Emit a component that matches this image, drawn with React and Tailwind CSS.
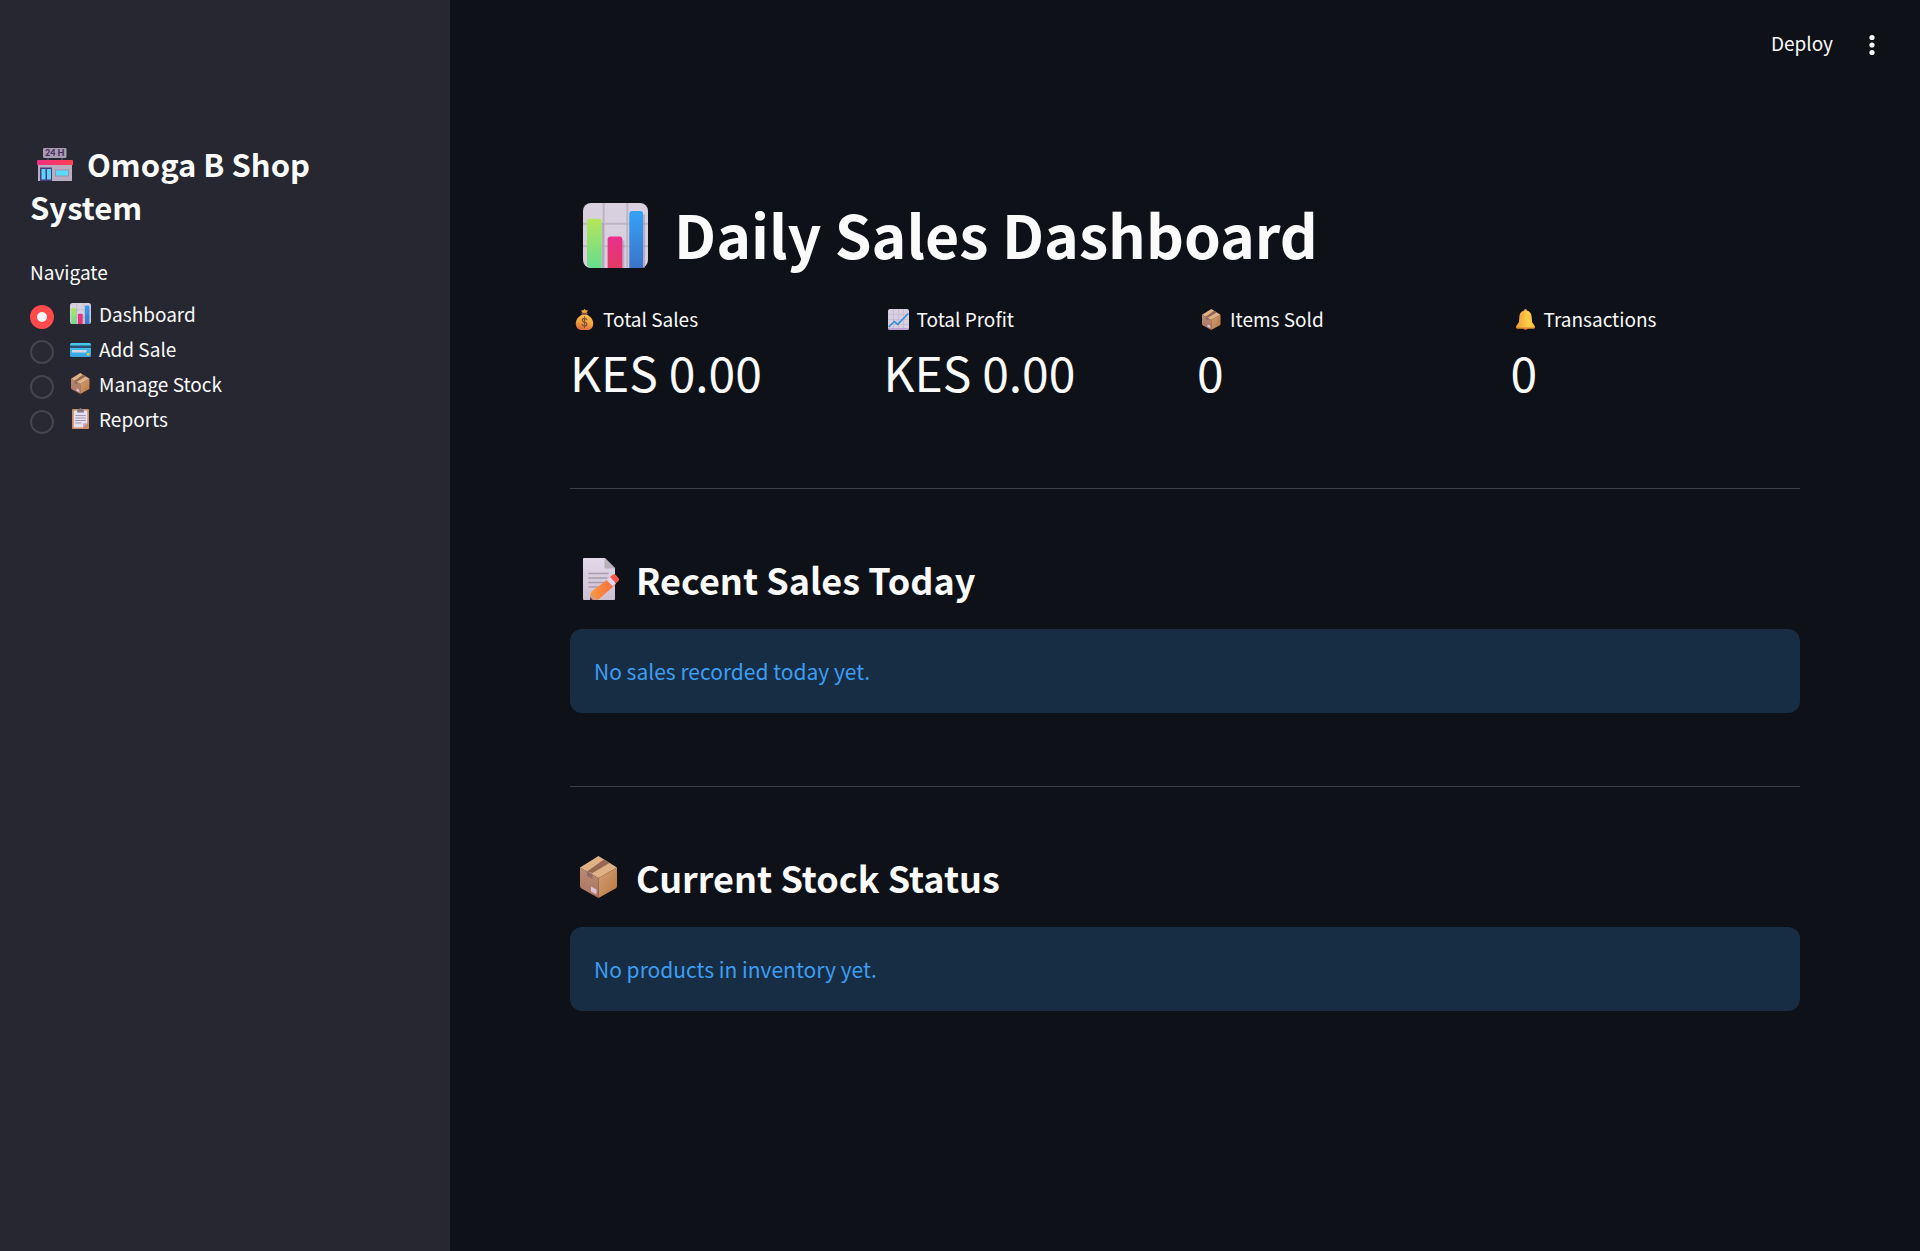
import { useId, useState } from "react";

function ChartEmoji({ className }) {
  const id = useId();
  return (
    <svg viewBox="0 0 66 66" className={className} aria-hidden="true">
      <defs>
        <linearGradient id={id + "g"} x1="0" y1="0" x2="0" y2="1">
          <stop stopColor="#b4e65a" />
          <stop offset="1" stopColor="#66dd8e" />
        </linearGradient>
        <linearGradient id={id + "r"} x1="0" y1="0" x2="0" y2="1">
          <stop stopColor="#e9308c" />
          <stop offset="1" stopColor="#e33a64" />
        </linearGradient>
        <linearGradient id={id + "b"} x1="0" y1="0" x2="0" y2="1">
          <stop stopColor="#34a2f6" />
          <stop offset="1" stopColor="#3c74ca" />
        </linearGradient>
      </defs>
      <rect width="66" height="66" rx="8" fill="#d8d0de" />
      <path d="M21 0V66M45 0V66M0 21H66M0 44H66" stroke="#bcb5c4" strokeWidth="2" />
      <path d="M20 20V66M41 38V66M62 12V66" stroke="#a595b6" strokeWidth="2" opacity=".6" />
      <path d="M4 19a3 3 0 0 1 3-3h9a3 3 0 0 1 3 3v47H8q-4-1-4-4z" fill={`url(#${id}g)`} />
      <path d="M25 37a3 3 0 0 1 3-3h9a3 3 0 0 1 3 3v29H25z" fill={`url(#${id}r)`} />
      <path d="M47 11a3 3 0 0 1 3-3h8a3 3 0 0 1 3 3v55H47z" fill={`url(#${id}b)`} />
    </svg>
  );
}

function ShopEmoji({ className }) {
  const id = useId();
  return (
    <svg viewBox="0 0 36 33" className={className} aria-hidden="true">
      <defs>
        <linearGradient id={id}>
          <stop stopColor="#ec2f86" />
          <stop offset="1" stopColor="#ff3f4e" />
        </linearGradient>
      </defs>
      <path d="M11 9v4M25 9v4" stroke="#5b4a66" strokeWidth="1.5" />
      <rect x="6" y="0" width="23.500" height="10" rx="1.200" fill="#a99bb0" />
      <text x="17.800" y="8.300" textAnchor="middle" fontSize="9" fontWeight="900" fill="#4b2e68" fontFamily="Lato, sans-serif">
        24 H
      </text>
      <path d="M1 16h34v17H1z" fill="#b9adc2" />
      <path d="M0 13q0-1 1-1h34q1 0 1 1v4H0z" fill={`url(#${id})`} />
      <path d="M3 19.500h12V33H3z" fill="#4a3a7c" />
      <path d="M4.500 21h4v10.500h-4zM10 21h4v10.500h-4z" fill="#58d4fb" />
      <rect x="18.500" y="22" width="13" height="6" fill="#58dcfd" stroke="#9c90ac" />
    </svg>
  );
}

function CardEmoji({ className }) {
  const id = useId();
  return (
    <svg viewBox="0 0 21 21" className={className} aria-hidden="true">
      <defs>
        <linearGradient id={id} x1="0" y1="0" x2="0" y2="1">
          <stop stopColor="#45cdea" />
          <stop offset="1" stopColor="#36a3e4" />
        </linearGradient>
      </defs>
      <rect y="5" width="21" height="14" rx="1.500" fill={`url(#${id})`} />
      <path d="M0 7.500h21V10H0z" fill="#2e4d70" />
      <rect x="2" y="12" width="14.500" height="2.600" rx=".5" fill="#d5d3e4" />
      <rect x="17" y="15" width="2.400" height="2.400" rx=".4" fill="#f9c440" />
    </svg>
  );
}

function BoxEmoji({ className }) {
  const id = useId();
  return (
    <svg viewBox="0 0 42 42" className={className} aria-hidden="true">
      <defs>
        <linearGradient id={id + "l"} x1="0" y1="0" x2="0" y2="1">
          <stop stopColor="#b98a72" />
          <stop offset="1" stopColor="#ad7460" />
        </linearGradient>
        <linearGradient id={id + "r"} x1="0" y1="0" x2="1" y2="1">
          <stop stopColor="#d3a076" />
          <stop offset="1" stopColor="#b8763f" />
        </linearGradient>
      </defs>
      <path d="M2 11.500 20.500 22v20L3.500 32.500Q2 31.500 2 30z" fill={`url(#${id}l)`} />
      <path d="M39 11.500 20.500 22v20l17-9.500q1.500-1 1.500-2.500z" fill={`url(#${id}r)`} />
      <path d="M20.500 0 39 11.500 20.500 22 2 11.500z" fill="#dfb184" />
      <path d="M26 3.500 31.500 7 14.500 17 9 15.500z" fill="#966753" />
      <path d="M9 15.500 14.500 18v5L9 20z" fill="#8f6b66" />
      <path d="m13 30.500 5.500 3v5l-5.500-3z" fill="#d9c3dc" />
    </svg>
  );
}

function ClipboardEmoji({ className }) {
  return (
    <svg viewBox="0 0 21 21" className={className} aria-hidden="true">
      <rect x="2" y="1" width="17" height="20" rx="1" fill="#cf8c62" />
      <path d="M3.800 2.500h13.500v12.700L13 19.600H3.800z" fill="#e6dff0" />
      <path d="M17.300 15.200 13 19.600v-3.400q0-1 1-1z" fill="#b9abc9" />
      <path d="M5.300 7.500h10.500M5.300 10h10.500M5.300 12.500h10.500M5.300 15h6" stroke="#9a8fa9" strokeWidth=".9" />
      <path d="M7.200 4.500V2.300q0-.8.800-.8h1q.2-1.500 1.500-1.500T12 1.500h1q.8 0 .8.800v2.200z" fill="#7f7685" />
    </svg>
  );
}

function MoneyBagEmoji({ className }) {
  const id = useId();
  return (
    <svg viewBox="0 0 21 21" className={className} aria-hidden="true">
      <defs>
        <linearGradient id={id} x1=".6" y1="0" x2=".3" y2="1">
          <stop stopColor="#fcc44b" />
          <stop offset=".5" stopColor="#f3a23c" />
          <stop offset="1" stopColor="#d9683c" />
        </linearGradient>
      </defs>
      <path d="M8.500 4 7 1.200 9 1.500 10.500 0 12 1.500 14 1.200 12.500 4z" fill="#f5a93d" />
      <path d="M8.300 5.500h4.400c3.800 1.800 6.500 5.300 6.500 9 0 4.300-2.500 6.500-5.500 6.500H7.300c-3 0-5.500-2.200-5.500-6.500 0-3.700 2.700-7.200 6.500-9z" fill={`url(#${id})`} />
      <path d="M8 4.600h5" stroke="#8c553c" strokeWidth="1.500" strokeLinecap="round" />
      <path d="M12.800 10.800c-.4-1-1.300-1.400-2.300-1.400-1.300 0-2.300.7-2.300 1.800 0 2.600 4.700 1.200 4.700 3.900 0 1.200-1.100 1.900-2.400 1.900s-2.200-.6-2.500-1.600M10.500 8v10.500" stroke="#84513f" strokeWidth="1.300" fill="none" strokeLinecap="round" />
    </svg>
  );
}

function TrendEmoji({ className }) {
  return (
    <svg viewBox="0 0 21 21" className={className} aria-hidden="true">
      <rect width="21" height="21" rx="2" fill="#d8d0e2" />
      <path d="M5.500 0v21M10.500 0v21M15.500 0v21M0 5.500h21M0 10.500h21M0 15.500h21" stroke="#c3bbce" strokeWidth=".8" />
      <path d="M.5 20h20" stroke="#b596cf" strokeWidth="1.500" />
      <path d="m.7 18 5.600-5.500 3.400 2.800L20.300 4.500" stroke="#3593dc" strokeWidth="1.700" fill="none" strokeLinejoin="round" />
    </svg>
  );
}

function BellEmoji({ className }) {
  const id = useId();
  return (
    <svg viewBox="0 0 21 21" className={className} aria-hidden="true">
      <defs>
        <linearGradient id={id}>
          <stop stopColor="#f49a3a" />
          <stop offset=".65" stopColor="#fdcf48" />
          <stop offset="1" stopColor="#f9b940" />
        </linearGradient>
      </defs>
      <path d="M8 18.500h5q-.3 2.500-2.500 2.500T8 18.500z" fill="#c9553c" />
      <circle cx="10.500" cy="1.600" r="1.500" fill="#f2a03c" />
      <path d="M10.500 1.500c3.800 0 5.800 2.500 6.100 6l.5 5.500 2.600 4q.8 2.500-1.200 2.500h-16q-2 0-1.200-2.500l2.600-4 .5-5.500c.3-3.500 2.300-6 6.100-6z" fill={`url(#${id})`} />
      <path d="M1.500 18.900h18" stroke="#e68240" strokeWidth="1" />
    </svg>
  );
}

function MemoEmoji({ className }) {
  const id = useId();
  return (
    <svg viewBox="-2 0 42 42" className={className} aria-hidden="true">
      <defs>
        <linearGradient id={id + "p"} x1="0" y1="0" x2="0" y2="1">
          <stop stopColor="#e2d9ea" />
          <stop offset="1" stopColor="#cdbfd2" />
        </linearGradient>
        <linearGradient id={id + "o"}>
          <stop stopColor="#ff9a3c" />
          <stop offset="1" stopColor="#f4693f" />
        </linearGradient>
      </defs>
      <path d="M4 0h21l10 10v31q0 1-1 1H4q-1 0-1-1V1q0-1 1-1z" fill={`url(#${id}p)`} />
      <path d="M24.500 0 35 10.500h-9q-1.500 0-1.500-1.500z" fill="#b6b0b9" />
      <path d="M9 15.500h19M9 20h18M9 24.500h15M9 29h9" stroke="#a69dac" strokeWidth="1.600" strokeLinecap="round" />
      <path d="m11 34 19-14.500 6 6.500-17.500 15.500-8.500.5z" fill={`url(#${id}o)`} />
      <path d="m11 35 6.500 7H10z" fill="#d89a7d" />
      <path d="m10.300 39 2.400 3H10z" fill="#4a2b55" />
      <path d="m26.500 22 3.500-3 6 6.200-3.400 3.100z" fill="#e3d8ee" />
      <path d="m30 19 3-2.400q1.500-1 2.800.3l2.700 3q1.300 1.500 0 3L36 25.200z" fill="#f9584f" />
    </svg>
  );
}

const pages = [
  { name: "Dashboard", Icon: ChartEmoji },
  { name: "Add Sale", Icon: CardEmoji },
  { name: "Manage Stock", Icon: BoxEmoji },
  { name: "Reports", Icon: ClipboardEmoji },
];

const metrics = [
  { label: "Total Sales", value: "KES 0.00", Icon: MoneyBagEmoji },
  { label: "Total Profit", value: "KES 0.00", Icon: TrendEmoji },
  { label: "Items Sold", value: "0", Icon: BoxEmoji },
  { label: "Transactions", value: "0", Icon: BellEmoji },
];

function Section({ Icon, title, message }) {
  return (
    <section className="mt-[73px] border-t border-[#3d3f43] pt-[65px]">
      <h2 className="flex items-center text-[36px] font-semibold leading-[50px]">
        <Icon className="ml-2 mr-4 size-[42px] shrink-0" />
        {title}
      </h2>
      <p className="mt-[25px] rounded-xl bg-[#172d43] px-6 py-6 text-[21px] leading-9 text-[#3d9df3]">{message}</p>
    </section>
  );
}

export default function App() {
  const [page, setPage] = useState("Dashboard");
  return (
    <div className="flex min-h-screen bg-[#0e1117] font-['Noto_Sans_CJK_SC',sans-serif] text-[#fafafa]">
      <aside className="w-[450px] shrink-0 bg-[#262730] px-[30px] pt-[142px]">
        <h1 className="text-[31px] font-semibold leading-[43px]">
          <ShopEmoji className="-mb-1 ml-[7px] mr-[14px] inline h-[33px] w-9 align-baseline" />
          Omoga B Shop System
        </h1>
        <fieldset className="mt-7">
          <legend className="text-[19px] leading-8">Navigate</legend>
          <div className="mt-2">
            {pages.map(({ name, Icon }) => (
              <label key={name} className="flex h-[35px] cursor-pointer items-center text-[19px] leading-8">
                <input
                  type="radio"
                  name="page"
                  value={name}
                  checked={page === name}
                  onChange={() => setPage(name)}
                  className="mt-[7px] size-6 appearance-none rounded-full border-2 border-[#44454e] bg-[#282932] checked:border-[7px] checked:border-[#ff4b4b] checked:bg-[#f3f4f9]"
                />
                <Icon className="ml-4 mr-2 size-[21px]" />
                {name}
              </label>
            ))}
          </div>
        </fieldset>
      </aside>
      <div className="min-w-0 flex-1">
        <header className="flex h-[90px] items-center justify-end gap-[27px] pr-9">
          <button className="pb-1 text-[19px] leading-8">Deploy</button>
          <button aria-label="Main menu" className="grid size-6 place-items-center">
            <svg viewBox="0 0 24 24" className="size-6" fill="currentColor" aria-hidden="true">
              <circle cx="12" cy="4.500" r="2.600" />
              <circle cx="12" cy="12" r="2.600" />
              <circle cx="12" cy="19.500" r="2.600" />
            </svg>
          </button>
        </header>
        <main className="px-[120px] pb-16 pt-[104px]">
          <h1 className="flex items-center text-[59px] font-bold leading-[80px]">
            <ChartEmoji className="ml-[13px] mr-[26px] mt-[3px] size-[65px] shrink-0" />
            Daily Sales Dashboard
          </h1>
          <dl className="mt-[29px] grid grid-cols-4 gap-6 pb-2">
            {metrics.map(({ label, value, Icon }) => (
              <div key={label}>
                <dt className="flex items-center text-[19px] leading-8">
                  <Icon className="ml-1 mr-2 size-[21px]" />
                  {label}
                </dt>
                <dd className="text-[48px] leading-[72px]">{value}</dd>
              </div>
            ))}
          </dl>
          <Section Icon={MemoEmoji} title="Recent Sales Today" message="No sales recorded today yet." />
          <Section Icon={BoxEmoji} title="Current Stock Status" message="No products in inventory yet." />
        </main>
      </div>
    </div>
  );
}
